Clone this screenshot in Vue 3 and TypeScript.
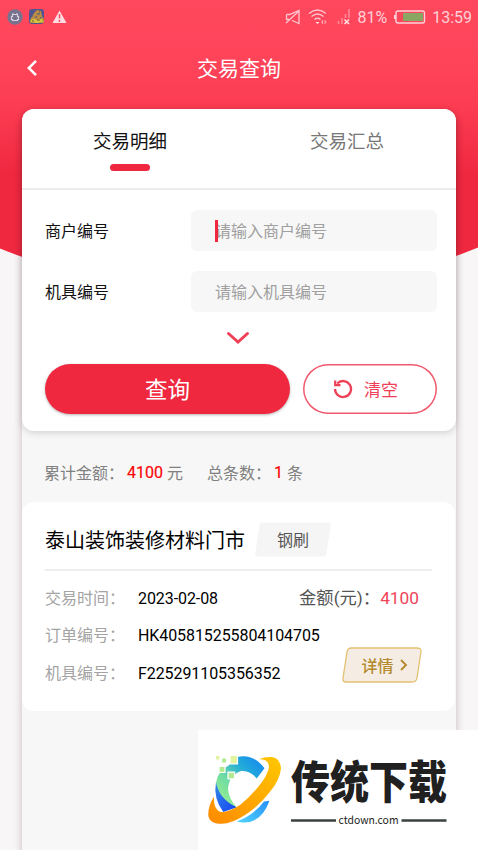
<template>
  <div class="page" lang="zh-CN">
    <!-- 顶部红色弧形背景 -->
    <svg class="hero-bg" viewBox="0 0 478 300" preserveAspectRatio="none">
      <defs>
        <linearGradient id="heroFill" x1="0" y1="0" x2="0" y2="300" gradientUnits="userSpaceOnUse">
          <stop offset="0" stop-color="#ff485d" />
          <stop offset="0.2" stop-color="#ff445a" />
          <stop offset="0.37" stop-color="#fb3b51" />
          <stop offset="0.58" stop-color="#ef2840" />
          <stop offset="1" stop-color="#ef2840" />
        </linearGradient>
      </defs>
      <path d="M0 0H478V247.500Q239 345 0 248.500Z" fill="url(#heroFill)" />
    </svg>

    <!-- 状态栏 -->
    <div class="status-bar">
      <svg class="status-app" width="16" height="16" viewBox="0 0 16 16">
        <circle cx="8" cy="8" r="7.700" fill="#77738f" />
        <path d="M5.500 5.500h5v2h1v3h-1v1h-5v-1h-1v-3h1z" fill="none" stroke="#d9d0dc" stroke-width="1.200" />
        <path d="M6 4v1.500M10 4v1.500" stroke="#d9d0dc" />
      </svg>
      <svg class="status-game" width="15" height="15" viewBox="0 0 15 15">
        <rect width="15" height="15" rx="3" fill="#52548d" />
        <path d="M2 9l3-5 3-3 4 1 1 5 2 3v4H1z" fill="#ba8c43" />
        <path d="M1 11l4-1 3 1 5-2 1 4-6 1-6-1z" fill="#d5c33f" />
        <path d="M2 4h3M1 7h3M8 5h3M6 8h2M11 9h2" stroke="#3e568d" />
        <path d="M3 12h2M8 11h3M10 3h1" stroke="#745637" />
      </svg>
      <svg width="15" height="14" viewBox="0 0 15 14">
        <path d="M7.500.5L14.500 13H.5z" fill="#ffdce2" />
        <path d="M7.500 4v4.500M7.500 10v2" stroke="#f54b60" stroke-width="1.500" />
      </svg>
      <span class="status-space"></span>
      <svg class="status-mute" width="16" height="16" viewBox="0 0 16 16">
        <path d="M1.500 5.500h3L14 1.500v13L7 11.500M1.500 5.500v5h2.500M1 14L14.500 1.500" fill="none" stroke="#ffc6cf" stroke-width="1.300" />
      </svg>
      <svg class="status-wifi" width="20" height="16" viewBox="0 0 20 16">
        <path d="M1 4.500Q9.500-2.500 18 4.500M3.500 7.500Q9.500 2.500 15.500 7.500M6.500 10.500Q9.500 8 12.500 10.500" fill="none" stroke="#ffc6cf" stroke-width="1.500" />
        <path d="M7.500 13h4l-2 2z" fill="#ffe7ea" />
        <path d="M14.500 11v4M17 11v4M13 13h1.500M17 13h1.500" stroke="#ffa6b2" />
      </svg>
      <svg class="status-signal" width="14" height="17" viewBox="0 0 14 17">
        <path d="M1.500 13v3M5 10v6M8.500 6v4M12 1v9" stroke="#ff8796" stroke-width="1.600" />
        <path d="M7.500 11.500l4.500 4.500M12 11.500l-4.500 4.500" stroke="#ffe4e8" stroke-width="1.500" />
      </svg>
      <span class="status-text status-percent">81%</span>
      <svg class="status-battery" width="32" height="14" viewBox="0 0 32 14">
        <rect x="2" y="1" width="28.500" height="12" rx="2" fill="none" stroke="#ffd2d9" stroke-width="1.400" />
        <path d="M1 5v4" stroke="#ffd2d9" stroke-width="2" />
        <rect x="9" y="3" width="20" height="8" fill="#8aa663" />
      </svg>
      <span class="status-text">13:59</span>
    </div>

    <header class="nav-bar">
      <svg class="nav-back" width="12" height="18" viewBox="0 0 12 18">
        <path d="M10 1.800L2.800 9l7.200 7.200" fill="none" stroke="#fff" stroke-width="2.500" />
      </svg>
      <h1 class="nav-title">交易查询</h1>
    </header>

    <main class="panel">
      <section class="query-card">
        <div class="tabs">
          <button
            v-for="tab in tabs"
            :key="tab"
            class="tab"
            :class="{ active: tab === activeTab }"
            @click="activeTab = tab"
          >
            {{ tab }}
          </button>
        </div>

        <!-- 查询条件 -->
        <div class="query-form">
          <label v-for="field in fields" :key="field.label" class="field">
            <span class="field-label">{{ field.label }}</span>
            <span class="field-box" :class="{ focused: field.focused }">
              <input v-model="field.value" class="field-input" :placeholder="field.placeholder" />
            </span>
          </label>

          <svg class="expand-icon" width="24" height="14" viewBox="0 0 24 14">
            <path d="M2.500 2.500L12 11l9.500-8.500" fill="none" stroke="#ef4057" stroke-width="3" stroke-linecap="round" />
          </svg>

          <div class="actions">
            <button class="search-btn">查询</button>
            <button class="reset-btn" @click="handleReset">
              <svg width="20" height="20" viewBox="0 0 20 20">
                <path d="M4.200 4.500A8 8 0 1 1 2 10" fill="none" stroke="#ee4057" stroke-width="2.300" />
                <path d="M2.200 1.500v4.700h5.300" fill="none" stroke="#ee4057" stroke-width="2.200" />
              </svg>
              <span>清空</span>
            </button>
          </div>
        </div>
      </section>

      <div class="summary">
        <span>累计金额：</span><b class="sum-value">4100</b><span>元</span>
        <span class="sum-count">总条数：</span><b class="sum-value">1</b><span>条</span>
      </div>

      <!-- 交易记录 -->
      <article class="record">
        <div class="record-head">
          <h2 class="record-title">泰山装饰装修材料门市</h2>
          <span class="record-tag">
            <svg class="skew-bg" viewBox="0 0 76 35">
              <path d="M8 .5H73Q76.300.5 75.800 3L71.500 31.500Q71 34.500 68 34.500H2.500Q-.3 34.500.2 31.500L4.500 3Q5 .5 8 .5Z" fill="#f5f5f5" />
            </svg>
            <span class="skew-text">钢刷</span>
          </span>
        </div>
        <div class="record-body">
          <dl class="record-list">
            <div v-for="row in rows" :key="row.label" class="record-row">
              <dt>{{ row.label }}：</dt>
              <dd>{{ row.value }}</dd>
            </div>
          </dl>
          <div class="record-side">
            <div class="amount">金额(元)：<span>4100</span></div>
            <button class="detail-btn">
              <svg class="skew-bg" viewBox="0 0 80 36">
                <path d="M9.500 1H75Q79.500 1 79 4.500L75 31Q74.300 35 70 35H4Q.5 35 1 31L5 5Q5.600 1 9.500 1Z" fill="#f5ede4" stroke="#e3c070" stroke-width="1.300" />
              </svg>
              <span class="skew-text">详情</span>
              <svg class="detail-arrow" width="8" height="12" viewBox="0 0 8 12">
                <path d="M1 1l5 5-5 5" fill="none" stroke="#b38a2d" stroke-width="1.900" />
              </svg>
            </button>
          </div>
        </div>
      </article>
    </main>

    <!-- 右下角品牌标识 -->
    <aside class="brand">
      <svg width="280" height="120" viewBox="0 0 280 120">
        <defs>
          <linearGradient id="brandBlue" x1="20" y1="78" x2="66" y2="32" gradientUnits="userSpaceOnUse">
            <stop offset="0" stop-color="#a4f58c" />
            <stop offset="0.4" stop-color="#6fdca2" />
            <stop offset="0.7" stop-color="#23acd8" />
            <stop offset="1" stop-color="#1689f0" />
          </linearGradient>
          <linearGradient id="brandDeep" x1="0" y1="0" x2="1" y2="1">
            <stop offset="0" stop-color="#3488e7" />
            <stop offset="1" stop-color="#1644f4" />
          </linearGradient>
          <linearGradient id="brandSky" x1="0" y1="1" x2="1" y2="0">
            <stop offset="0" stop-color="#4fd4ff" />
            <stop offset="1" stop-color="#278ff7" />
          </linearGradient>
          <linearGradient id="brandGold" x1="0" y1="1" x2="1" y2="0">
            <stop offset="0" stop-color="#ff8a00" />
            <stop offset="1" stop-color="#ffc700" />
          </linearGradient>
        </defs>
        <path d="M39 27Q55 23 66.500 38.300L58.700 48.500Q52 40 43 41Q31 45 30 59Q31 69 38.700 77.500L33 79Q19 68 18 53Q20 40 30 36Z" fill="url(#brandBlue)" />
        <path d="M18 52Q21 69 38.700 77.300L25.300 82Q15 68 18 52Z" fill="url(#brandDeep)" />
        <path d="M38.700 91.500Q56 85 66 71.500L71.500 70.800Q62 97 38.700 91.500Z" fill="url(#brandSky)" />
        <path d="M61 29.300Q67 26.500 74 27Q82 28 83 38.300Q82 50 72 61.700Q61 76 47 85Q34 93.500 23.700 93.800Q11 94 10.300 85Q10 76 16 66.500Q15 80 23.700 82.300Q32 81.500 42 75Q52 67 60.500 56.500Q70 45 71 37Q71 29 61 29.300Z" fill="url(#brandGold)" />
        <g fill="#e2f39d" stroke="#fff" stroke-width="1.200">
          <path d="M17.500 25.500h4.500v4.500h-4.500zM32 25.300h7.500v8.500H32z" />
          <path d="M23.500 28h5.200v5.200h-5.200zM21 36.500h6v6h-6zM30 42.200h6.600v6.600H30z" fill="#b2ea92" />
        </g>
        <text
          class="brand-name"
          x="93"
          y="68"
          textLength="156"
          lengthAdjust="spacingAndGlyphs"
          transform="translate(0 -6) scale(1 1.100)"
        >传统下载</text>
        <path d="M93 90.500h45M203.500 90.500h45" stroke="#3b4240" stroke-width="2.400" />
        <text class="brand-site" x="140.500" y="94" textLength="60" lengthAdjust="spacingAndGlyphs">ctdown.com</text>
      </svg>
    </aside>
  </div>
</template>

<script setup lang="ts">
import { ref } from 'vue'

/**
 * 查询条件接口
 */
interface QueryField {
  label: string
  placeholder: string
  value: string
  focused: boolean
}

interface RecordRow {
  label: string
  value: string
}

const tabs = ['交易明细', '交易汇总']
// 当前选中的标签
const activeTab = ref('交易明细')

const fields = ref<QueryField[]>([
  { label: '商户编号', placeholder: '请输入商户编号', value: '', focused: true },
  { label: '机具编号', placeholder: '请输入机具编号', value: '', focused: false }
])

const rows: RecordRow[] = [
  { label: '交易时间', value: '2023-02-08' },
  { label: '订单编号', value: 'HK405815255804104705' },
  { label: '机具编号', value: 'F225291105356352' }
]

/**
 * 清空查询条件
 */
const handleReset = () => {
  fields.value.forEach(f => {
    f.value = ''
  })
}
</script>

<style>
body {
  margin: 0;
  overflow: hidden;
}
</style>

<style scoped>
.page {
  position: relative;
  box-sizing: border-box;
  display: flex;
  flex-direction: column;
  width: 478px;
  height: 850px;
  overflow: hidden;
  background: #f8f6f7;
  font-family: Roboto, 'Noto Sans CJK SC', sans-serif;
  font-size: 16px;
}

.page svg {
  display: block;
  flex-shrink: 0;
}

button {
  padding: 0;
  border: none;
  background: none;
  font-family: inherit;
  cursor: pointer;
}

.hero-bg {
  position: absolute;
  top: 0;
  left: 0;
  width: 478px;
  height: 300px;
}

/* 状态栏 */
.status-bar {
  position: relative;
  display: flex;
  align-items: center;
  height: 33px;
  padding: 0 6px 0 7px;
  box-sizing: border-box;
}

.status-game {
  margin: 0 8px 0 6px;
}

.status-space {
  flex: 1;
}

.status-wifi {
  margin-left: 7px;
}

.status-signal {
  margin-left: 9px;
}

.status-battery {
  margin: 0 6px 0 7px;
}

.status-text {
  color: #ffd0d7;
  font-size: 16px;
  line-height: 33px;
  padding-top: 2px;
}

.status-percent {
  margin-left: 6px;
}

/* 导航栏 */
.nav-bar {
  position: relative;
  display: grid;
  grid-template-columns: 60px 1fr 60px;
  align-items: center;
  height: 76px;
  flex-shrink: 0;
  padding-bottom: 7px;
  box-sizing: border-box;
}

.nav-back {
  margin-left: 26px;
}

.nav-title {
  margin: 0;
  padding-top: 2px;
  color: #fff;
  font-size: 21px;
  font-weight: 400;
  line-height: 30px;
  text-align: center;
}

/* 主面板 */
.panel {
  position: relative;
  flex: 1;
  margin: 0 22px;
  border-radius: 12px 12px 0 0;
  background: #f7f7f7;
  box-shadow: 0 4px 9px rgba(60, 20, 30, 0.26);
}

.query-card {
  height: 321.500px;
  border-radius: 12px;
  background: #fff;
  box-shadow: 0 2px 7px rgba(0, 0, 0, 0.15);
}

.tabs {
  display: grid;
  grid-template-columns: 216px 1fr;
  height: 81px;
  box-sizing: border-box;
  border-bottom: 2px solid #ededed;
}

.tab {
  display: flex;
  flex-direction: column;
  align-items: center;
  padding-top: 19.500px;
  color: #777;
  font-size: 18.500px;
  line-height: 27px;
}

.tab.active {
  color: #111;
}

.tab.active::after {
  content: '';
  width: 40px;
  height: 7px;
  margin-top: 8.500px;
  border-radius: 4px;
  background: #ef2840;
}

.query-form {
  padding: 20px 19px 0 23px;
}

.field {
  display: flex;
  align-items: center;
  height: 41px;
  margin-bottom: 20px;
}

.field-label {
  width: 146px;
  padding-bottom: 2px;
  color: #111;
}

.field-box {
  position: relative;
  display: flex;
  flex: 1;
  height: 41px;
  border-radius: 6px;
  background: #f7f7f7;
}

.field-input {
  width: 100%;
  padding: 2px 24px 0;
  border: none;
  outline: none;
  background: transparent;
  font-family: inherit;
  font-size: 16px;
}

.field-input::placeholder {
  color: #a0a0a0;
}

/* 输入光标 */
.field-box.focused::before {
  content: '';
  position: absolute;
  top: 9.500px;
  left: 24px;
  width: 2.500px;
  height: 22px;
  background: #ef2840;
}

.expand-icon {
  margin: -1px auto 0 181px;
}

.actions {
  display: grid;
  grid-template-columns: 245px 134px;
  justify-content: space-between;
  margin-top: 19px;
  height: 50px;
}

.search-btn {
  padding-bottom: 2px;
  border-radius: 25px;
  background: #ef2840;
  box-shadow: 0 1px 3px rgba(0, 0, 0, 0.3);
  color: #fff;
  font-size: 22.500px;
}

.reset-btn {
  display: flex;
  align-items: center;
  justify-content: center;
  gap: 11px;
  padding-right: 9px;
  border-radius: 25px;
  box-shadow: inset 0 0 0 1.500px #f0596d;
  color: #ef3e55;
  font-size: 17px;
}

.reset-btn span {
  padding-bottom: 1px;
}

/* 汇总 */
.summary {
  display: flex;
  align-items: center;
  height: 24px;
  padding: 29px 22px 0;
  margin-bottom: 18.500px;
  color: #808080;
}

.sum-value {
  margin: 0 4px 0 3px;
  padding-top: 1px;
  color: #f00;
  font-weight: 400;
  -webkit-text-stroke: 0.15px #f00;
}

.sum-count {
  margin-left: 24px;
}

/* 交易记录卡片 */
.record {
  height: 209px;
  margin-right: 1px;
  padding: 20px 23px 0;
  box-sizing: border-box;
  border-radius: 12px;
  background: #fff;
}

.record-head {
  display: flex;
  align-items: center;
  gap: 10px;
  height: 49px;
  padding-bottom: 12px;
  box-sizing: border-box;
  border-bottom: 2px solid #eee;
}

.record-title {
  margin: 0;
  padding-top: 2px;
  color: #000;
  font-size: 20px;
  font-weight: 400;
  line-height: 34px;
}

.record-tag {
  position: relative;
  display: flex;
  align-items: center;
  justify-content: center;
  width: 76px;
  height: 35px;
  color: #555;
}

.skew-bg {
  position: absolute;
  inset: 0;
  width: 100%;
  height: 100%;
}

.skew-text {
  position: relative;
  padding-bottom: 1px;
}

.record-body {
  display: flex;
  justify-content: space-between;
}

.record-list {
  margin: 8px 0 0;
}

.record-row {
  display: flex;
  align-items: center;
  height: 37.500px;
}

.record-row dt {
  width: 93px;
  padding-bottom: 2px;
  color: #a4a4a4;
}

.record-row dd {
  margin: 0;
  padding-top: 1px;
  color: #000;
  letter-spacing: -0.080px;
}

.record-side {
  display: flex;
  flex-direction: column;
  align-items: flex-end;
  padding: 14px 10px 0 0;
  margin-left: -30px;
}

.amount {
  margin-right: 3px;
  color: #555;
  font-size: 17.300px;
  line-height: 27px;
  white-space: nowrap;
}

.amount span {
  color: #f0455b;
}

.detail-btn {
  position: relative;
  display: flex;
  align-items: center;
  justify-content: center;
  width: 80px;
  height: 36px;
  margin-top: 35px;
  padding-left: 5px;
  gap: 6px;
  color: #b38a2d;
  font-size: 16px;
  font-weight: 500;
}

.detail-arrow {
  position: relative;
}

/* 品牌浮层 */
.brand {
  position: absolute;
  right: 0;
  bottom: 0;
  width: 280px;
  height: 120px;
  background: #fff;
}

.brand-name {
  fill: #202020;
  font-family: 'Noto Sans CJK SC', sans-serif;
  font-size: 41px;
  font-weight: 900;
}

.brand-site {
  fill: #222;
  font-family: 'Noto Sans CJK SC', sans-serif;
  font-size: 11px;
  font-weight: 400;
}
</style>
